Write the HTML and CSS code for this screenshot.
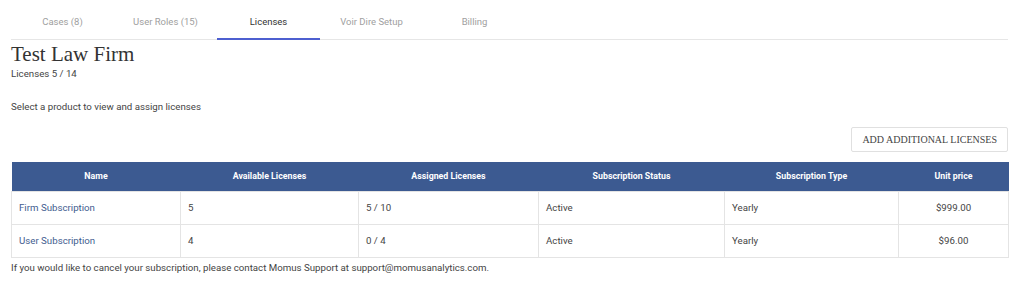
FILE: index.html
```html
<!DOCTYPE html>
<html>
<head>
<meta charset="utf-8">
<link rel="stylesheet" href="styles.css">
</head>
<body>
<div class="page">
  <nav class="tabs">
    <a class="tab">Cases (8)</a>
    <a class="tab">User Roles (15)</a>
    <a class="tab active">Licenses</a>
    <a class="tab">Voir Dire Setup</a>
    <a class="tab">Billing</a>
  </nav>
  <h1 class="title">Test Law Firm</h1>
  <div class="count">Licenses 5 / 14</div>
  <p class="hint">Select a product to view and assign licenses</p>
  <div class="actions">
    <button class="btn">ADD ADDITIONAL LICENSES</button>
  </div>
  <table class="grid">
    <colgroup>
      <col class="c1"><col class="c2"><col class="c3"><col class="c4"><col class="c5"><col class="c6">
    </colgroup>
    <thead>
      <tr>
        <th>Name</th>
        <th>Available Licenses</th>
        <th>Assigned Licenses</th>
        <th>Subscription Status</th>
        <th>Subscription Type</th>
        <th>Unit price</th>
      </tr>
    </thead>
    <tbody>
      <tr>
        <td class="name">Firm Subscription</td>
        <td>5</td>
        <td>5 / 10</td>
        <td>Active</td>
        <td>Yearly</td>
        <td class="price">$999.00</td>
      </tr>
      <tr>
        <td class="name">User Subscription</td>
        <td>4</td>
        <td>0 / 4</td>
        <td>Active</td>
        <td>Yearly</td>
        <td class="price">$96.00</td>
      </tr>
    </tbody>
  </table>
  <p class="note">If you would like to cancel your subscription, please contact Momus Support at support@momusanalytics.com.</p>
</div>
</body>
</html>
```

FILE: styles.css
```css
* { box-sizing: border-box; }
html, body { margin: 0; padding: 0; background: #fff; }
body {
  font-family: Roboto, "Liberation Sans", Arial, sans-serif;
  font-size: 9.7px;
  color: #444;
}
.page {
  padding: 0 16px 0 11px;
}
.tabs {
  display: flex;
  height: 40px;
  border-bottom: 1px solid #e6e6e6;
}
.tab {
  width: 103px;
  display: flex;
  align-items: center;
  justify-content: center;
  color: #a0a0a0;
  font-size: 9.5px;
  padding-top: 5px;
  border-bottom: 2px solid transparent;
  margin-bottom: -1px;
}
.tab.active {
  color: #333;
  border-bottom-color: #4d5fd0;
}
.title {
  margin: 2px 0 0;
  font-family: "Liberation Serif", "Times New Roman", serif;
  font-weight: normal;
  font-size: 21px;
  line-height: 24px;
  color: #333;
}
.count {
  margin-top: 1px;
  line-height: 14px;
  color: #444;
}
.hint {
  margin: 19px 0 0;
  line-height: 14px;
  color: #444;
}
.actions {
  display: flex;
  justify-content: flex-end;
  margin-top: 13px;
}
.btn {
  height: 25px;
  padding: 0 10px;
  background: #fff;
  border: 1px solid #e0e0e0;
  border-radius: 2px;
  font-family: "Liberation Serif", "Times New Roman", serif;
  font-size: 10px;
  color: #444;
}
.grid {
  margin-top: 10px;
  width: 997px;
  border-collapse: collapse;
  table-layout: fixed;
}
.c1 { width: 169px; }
.c2 { width: 178px; }
.c3 { width: 180px; }
.c4 { width: 186px; }
.c5 { width: 174px; }
.c6 { width: 110px; }
.grid th {
  background: #3c5a91;
  color: #fff;
  font-size: 8.8px;
  font-weight: bold;
  height: 29px;
  text-align: center;
  padding: 0;
}
.grid td {
  height: 33px;
  padding: 0 7px;
  border: 1px solid #e4e4e4;
  color: #444;
}
.grid td.name { color: #3f5d90; }
.grid td.price { text-align: center; }
.note {
  margin: 3px 0 0;
  line-height: 14px;
  color: #444;
}
```
